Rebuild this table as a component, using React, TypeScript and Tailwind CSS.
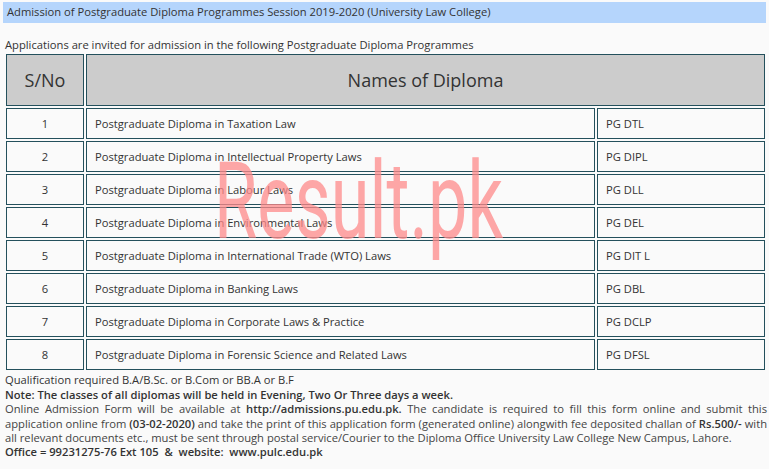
const ROWS = [
  { no: 1, name: "Postgraduate Diploma in Taxation Law", code: "PG DTL" },
  { no: 2, name: "Postgraduate Diploma in Intellectual Property Laws", code: "PG DIPL" },
  { no: 3, name: "Postgraduate Diploma in Labour Laws", code: "PG DLL" },
  { no: 4, name: "Postgraduate Diploma in Environmental Laws", code: "PG DEL" },
  { no: 5, name: "Postgraduate Diploma in International Trade (WTO) Laws", code: "PG DIT L" },
  { no: 6, name: "Postgraduate Diploma in Banking Laws", code: "PG DBL" },
  { no: 7, name: "Postgraduate Diploma in Corporate Laws & Practice", code: "PG DCLP" },
  { no: 8, name: "Postgraduate Diploma in Forensic Science and Related Laws", code: "PG DFSL" },
];

export default function App() {
  return (
    <div className="relative w-[769px] h-[469px] overflow-hidden bg-[#fafafa] text-[#333] text-[11.2px] leading-[14.4px] font-['Open_Sans',sans-serif]">
      <div className="mx-[3px] mt-[2px] h-[21px] bg-[#b5d5fc] pl-[4px] flex items-center">
        Admission of Postgraduate Diploma Programmes Session 2019-2020 (University Law College)
      </div>

      <p className="mt-[15px] pl-[5px]">
        Applications are invited for admission in the following Postgraduate Diploma Programmes
      </p>

      <table className="ml-[4px] w-[763px] border-separate border-spacing-[2px]">
        <thead>
          <tr>
            <th className="w-[78px] h-[52px] bg-[#cccccc] border border-[#24505c] text-[18px] font-normal">S/No</th>
            <th colSpan={2} className="h-[52px] bg-[#cccccc] border border-[#24505c] text-[18px] font-normal">
              Names of Diploma
            </th>
          </tr>
        </thead>
        <tbody>
          {ROWS.map((r) => (
            <tr key={r.no}>
              <td className="h-[31px] border border-[#24505c] text-center">{r.no}</td>
              <td className="h-[31px] w-[509px] border border-[#24505c] pl-[8px]">{r.name}</td>
              <td className="h-[31px] border border-[#24505c] pl-[8px]">{r.code}</td>
            </tr>
          ))}
        </tbody>
      </table>

      <div className="pl-[5px] pr-[2px] pt-[1px]">
        <p>Qualification required B.A/B.Sc. or B.Com or BB.A or B.F</p>
        <p className="font-semibold">Note: The classes of all diplomas will be held in Evening, Two Or Three days a week.</p>
        <p className="text-justify text-[#444]">
          Online Admission Form will be available at <span className="font-semibold text-[#333]">http://admissions.pu.edu.pk.</span> The candidate is required to fill this form online and submit this application online from <span className="font-semibold text-[#333]">(03-02-2020)</span> and take the print of this application form (generated online) alongwith fee deposited challan of <span className="font-semibold text-[#333]">Rs.500/-</span> with all relevant documents etc., must be sent through postal service/Courier to the Diploma Office University Law College New Campus, Lahore.
        </p>
        <p className="font-semibold">Office = 99231275-76 Ext 105 &nbsp;&amp;&nbsp; website: &nbsp;www.pulc.edu.pk</p>
      </div>

      <div className="pointer-events-none absolute left-[214px] top-[147px] origin-left scale-x-[0.65] text-[108px] leading-none font-['Roboto',sans-serif] font-normal text-[#ff8a8a] opacity-75 whitespace-nowrap">
        Result.pk
      </div>
    </div>
  );
}
